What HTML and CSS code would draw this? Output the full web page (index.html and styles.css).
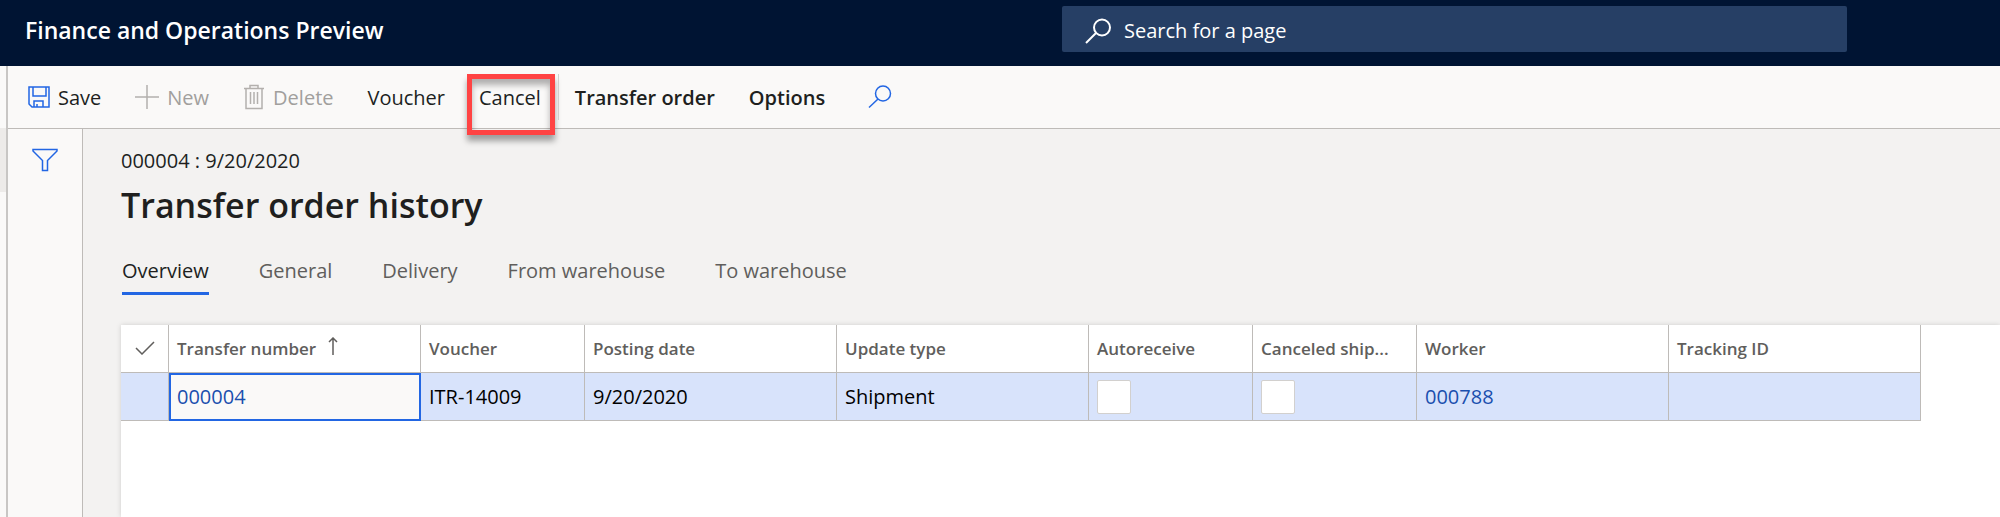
FILE: index.html
```html
<!DOCTYPE html>
<html lang="en">
<head>
<meta charset="utf-8">
<title>Transfer order history</title>
<link rel="stylesheet" href="styles.css">
</head>
<body>
<header class="topbar">
  <span class="brand">Finance and Operations Preview</span>
  <label class="search">
    <svg class="search-icon" viewBox="0 0 28 28" width="28" height="28"><circle cx="18" cy="10.500" r="8"/><path d="M12 16 2 26"/></svg>
    <input class="search-input" type="text" placeholder="Search for a page" aria-label="Search for a page">
  </label>
</header>
<div class="shell">
  <nav class="rail" aria-label="Navigation"><div class="rail-item"></div></nav>
  <div class="workspace">
    <div class="actions" role="toolbar">
      <button class="action"><svg class="icon" viewBox="0 0 22 22" width="22" height="22"><path d="M1 1H21V21H4L1 18ZM5 1V10H18V1M6 21V15H15V21M9 21V18"/></svg>Save</button>
      <button class="action" disabled><svg class="icon" viewBox="0 0 24 24" width="24" height="24"><path d="M12 0V24M0 12H24"/></svg>New</button>
      <button class="action" disabled><svg class="icon" viewBox="0 0 22 26" width="22" height="26"><path d="M1 4.500H21M3 4.500V24.500H19V4.500M7 4V1.500H15V4M7.500 8V20M11 8V20M14.500 8V20"/></svg>Delete</button>
      <button class="action">Voucher</button>
      <button class="action action-cancel">Cancel<span class="highlight"></span></button>
      <button class="action action-menu">Transfer order</button>
      <button class="action action-menu">Options</button>
      <button class="action action-find" aria-label="Search actions"><svg class="icon" viewBox="0 0 24 24" width="24" height="24"><circle cx="15" cy="8.500" r="7.500"/><path d="M10 14 1 22.500"/></svg></button>
    </div>
    <div class="content">
      <aside class="filters"><button class="filter" aria-label="Show filters"><svg class="icon" viewBox="0 0 26 24" width="26" height="24"><path d="M1 1.500H25V3L15.500 12.500V22.500H10.500V12.500L1 3Z"/></svg></button></aside>
      <main class="page">
        <p class="record">000004 : 9/20/2020</p>
        <h1 class="title">Transfer order history</h1>
        <div class="tabs" role="tablist">
          <button class="tab" role="tab" aria-selected="true">Overview</button>
          <button class="tab" role="tab" aria-selected="false">General</button>
          <button class="tab" role="tab" aria-selected="false">Delivery</button>
          <button class="tab" role="tab" aria-selected="false">From warehouse</button>
          <button class="tab" role="tab" aria-selected="false">To warehouse</button>
        </div>
        <section class="panel">
          <table class="grid">
            <colgroup><col class="col-mark"><col class="col-wide"><col class="col-small"><col class="col-wide"><col class="col-wide"><col class="col-small"><col class="col-small"><col class="col-wide"><col class="col-wide"></colgroup>
            <thead>
              <tr>
                <th class="mark"><svg viewBox="0 0 20 14" width="20" height="14" aria-label="Select"><path d="M1 7 7 13 19 1"/></svg></th>
                <th>Transfer number<svg class="sort" viewBox="0 0 10 18" width="10" height="18" aria-label="Ascending"><path d="M5 18V1M1 5 5 1 9 5"/></svg></th>
                <th>Voucher</th><th>Posting date</th><th>Update type</th><th>Autoreceive</th><th>Canceled ship...</th><th>Worker</th><th>Tracking ID</th>
              </tr>
            </thead>
            <tbody>
              <tr>
                <td></td>
                <td class="focused"><a href="#">000004</a></td>
                <td>ITR-14009</td>
                <td>9/20/2020</td>
                <td>Shipment</td>
                <td><input class="check" type="checkbox" aria-label="Autoreceive"></td>
                <td><input class="check" type="checkbox" aria-label="Canceled shipment"></td>
                <td><a href="#">000788</a></td>
                <td></td>
              </tr>
            </tbody>
          </table>
        </section>
      </main>
    </div>
  </div>
</div>
</body>
</html>
```
FILE: styles.css
```css
* { box-sizing: border-box; }

body {
  margin: 0;
  min-height: 100vh;
  display: flex;
  flex-direction: column;
  background: #f3f2f1;
  color: #201f1e;
  font: 20px/28px "Segoe UI", "Open Sans", "Noto Sans", sans-serif;
}

button { margin: 0; padding: 0; border: 0; background: none; color: inherit; font: inherit; }
svg { fill: none; stroke: currentColor; }

.topbar {
  display: flex;
  justify-content: space-between;
  align-items: flex-start;
  height: 66px;
  padding: 6px 153px 0 25px;
  background: #001433;
  color: #fff;
}
.brand { font-size: 23px; font-weight: 600; line-height: 48px; }
.search {
  display: flex;
  align-items: center;
  gap: 12px;
  width: 785px;
  height: 46px;
  padding: 4px 22px 0;
  border-radius: 2px;
  background: #263f65;
}
.search-icon { stroke-width: 2; }
.search-input { flex: 1; border: 0; padding: 0; outline: 0; background: none; color: #fff; font: inherit; }
.search-input::placeholder { color: #fff; opacity: 1; }

.shell { flex: 1; display: flex; }
.rail { width: 8px; padding-top: 62px; border-right: 2px solid #c8c6c4; background: #faf9f8; }
.rail-item { height: 64px; background: #edebe9; }
.workspace { flex: 1; min-width: 0; display: flex; flex-direction: column; }

.actions {
  display: flex;
  align-items: center;
  gap: 34px;
  height: 63px;
  padding: 2px 20px 0;
  border-bottom: 1px solid #bebbb8;
  background: #faf9f8;
}
.action { display: flex; align-items: center; gap: 8px; white-space: nowrap; }
.action .icon { margin-bottom: 2px; color: #2266e3; stroke-width: 1.500; }
.action:disabled { color: #a19f9d; }
.action:disabled .icon { color: #b3b0ad; }
.action-cancel { position: relative; }
.action-cancel::after {
  content: "";
  position: absolute;
  top: -10px;
  right: -18px;
  width: 1px;
  height: 46px;
  background: #d2d0ce;
}
.highlight {
  position: absolute;
  inset: -10px -14px -23px -12px;
  border: 5px solid #ff4343;
  box-shadow: 0 6px 6px rgba(0, 0, 0, .35), inset 0 6px 6px rgba(0, 0, 0, .3);
}
.action-menu { font-weight: 600; }
.action-find { margin-left: 9px; }

.content { flex: 1; display: flex; }
.filters { width: 75px; border-right: 1px solid #bebbb8; background: #faf9f8; padding: 19px 24px; }
.filter { display: flex; color: #2266e3; }
.filter .icon { stroke-width: 1.500; }

.page { flex: 1; min-width: 0; display: flex; flex-direction: column; padding: 18px 0 0 38px; }
.record { margin: 0; }
.title { margin: 0; font-size: 34px; font-weight: 600; line-height: 60px; }
.tabs { display: flex; gap: 50px; margin-top: 22px; padding-left: 1px; }
.tab { padding-bottom: 7px; border-bottom: 3px solid transparent; color: #605e5c; line-height: 28px; }
.tab[aria-selected="true"] { border-color: #2266e3; color: #201f1e; }

.panel { flex: 1; margin-top: 30px; background: #fff; box-shadow: 0 0 5px rgba(0, 0, 0, .15); }
.grid { table-layout: fixed; width: 1800px; border-collapse: separate; border-spacing: 0; }
.col-mark { width: 48px; }
.col-wide { width: 252px; }
.col-small { width: 164px; }
.grid th, .grid td {
  height: 48px;
  padding: 0 8px;
  border-right: 1px solid #bebbb8;
  border-bottom: 1px solid #bebbb8;
  text-align: left;
  white-space: nowrap;
}
.grid th { color: #605e5c; font-size: 17px; font-weight: 600; }
.grid .mark { padding: 0; text-align: center; }
.mark svg { stroke-width: 1.500; }
.sort { margin-left: 12px; stroke-width: 1.500; }
.grid td { background: #d8e3fb; color: #000; }
.grid .focused { background: #faf9f8; outline: 2px solid #2266e3; outline-offset: -2px; }
.grid a { color: #1a4fae; text-decoration: none; }
.check {
  display: block;
  appearance: none;
  width: 34px;
  height: 34px;
  margin: 0;
  border: 1px solid #d2d0ce;
  border-radius: 2px;
  background: #fff;
}
```
